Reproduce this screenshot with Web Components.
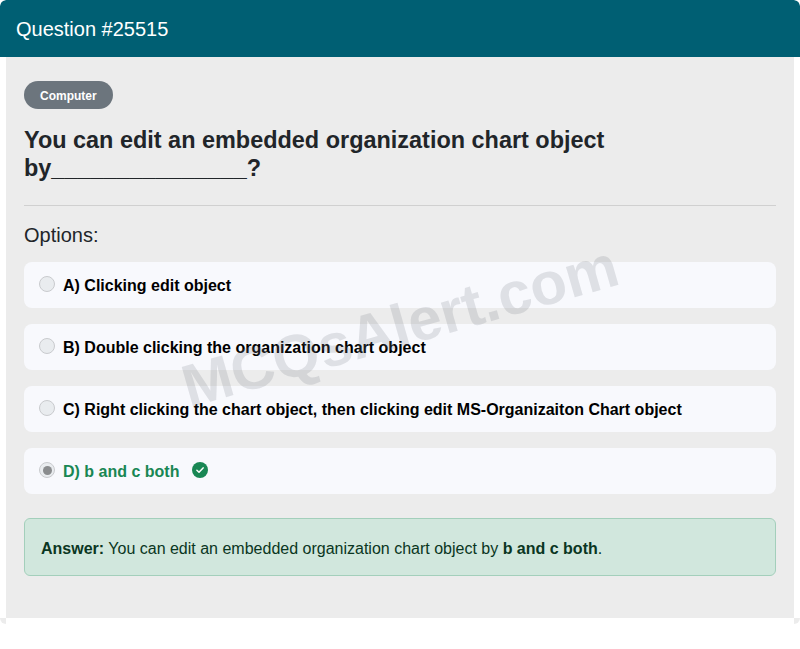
<!DOCTYPE html>
<html>
<head>
<meta charset="utf-8">
<title>Question #25515</title>
<style>
  html, body { margin: 0; background: #fff; }
  body { font-family: "Liberation Sans", Arial, sans-serif; }
</style>
</head>
<body>

<template id="q-option-tpl">
  <style>
    :host {
      display: flex;
      align-items: center;
      height: 46px;
      padding: 0 15px;
      box-sizing: border-box;
      background: #f8f9fd;
      border-radius: 8px;
      font-size: 16px;
      font-weight: 700;
      line-height: 24px;
      color: #000;
    }
    :host([correct]) { color: #198754; }
    .radio {
      flex: none;
      width: 16px;
      height: 16px;
      margin: 0 8px 2px 0;
      box-sizing: border-box;
      border: 1px solid #c9cbce;
      border-radius: 50%;
      background: #e9ecef;
      display: flex;
      align-items: center;
      justify-content: center;
    }
    .dot { display: none; width: 9px; height: 9px; border-radius: 50%; background: #8a8c8e; }
    :host([correct]) .dot { display: block; }
    .label { padding-top: 2px; }
    .check { display: none; flex: none; width: 16px; height: 16px; margin: 0 0 2px 13px; }
    :host([correct]) .check { display: block; }
  </style>
  <span class="radio"><span class="dot"></span></span>
  <span class="label"><slot></slot></span>
  <svg class="check" viewBox="0 0 16 16">
    <circle cx="8" cy="8" r="8" fill="#198754"/>
    <path d="M4.9 8.3 7 10.3 11.1 5.9" fill="none" stroke="#fff" stroke-width="1.5" stroke-linecap="round" stroke-linejoin="round"/>
  </svg>
</template>

<template id="q-card-tpl">
  <style>
    :host {
      display: block;
      position: relative;
      background: linear-gradient(#ececec, #ececec) bottom left / 100% 6px no-repeat;
      border-radius: 6px;
      height: 624px;
      overflow: hidden;
    }
    header {
      height: 57px;
      padding: 2px 16px 0;
      box-sizing: border-box;
      display: flex;
      align-items: center;
      background: #005f73;
      color: #fff;
      font-size: 20px;
      border-radius: 6px 6px 0 0;
    }
    .body {
      margin: 0 6px;
      height: 561px;
      box-sizing: border-box;
      padding: 24px 18px 0;
      background: #ececec;
    }
    .under { height: 6px; background: #fff; margin: 0 6px; }
    ::slotted([slot="mark"]) {
      position: absolute;
      left: 400px;
      top: 326px;
      transform: translate(-50%, -50%) rotate(-16deg);
    }
    .opts { display: flex; flex-direction: column; gap: 16px; }
    .tail { margin-top: 24px; }
  </style>
  <header><slot name="title"></slot></header>
  <div class="body">
    <slot name="badge"></slot>
    <slot name="question"></slot>
    <slot name="options-title"></slot>
    <div class="opts"><slot name="options"></slot></div>
    <div class="tail"><slot name="answer"></slot></div>
  </div>
  <div class="under"></div>
  <slot name="mark"></slot>
</template>

<q-card>
  <span slot="title">Question #25515</span>
  <q-badge slot="badge">Computer</q-badge>
  <q-title slot="question">You can edit an embedded organization chart object by_______________?</q-title>
  <q-heading slot="options-title">Options:</q-heading>
  <q-option slot="options">A) Clicking edit object</q-option>
  <q-option slot="options">B) Double clicking the organization chart object</q-option>
  <q-option slot="options">C) Right clicking the chart object, then clicking edit MS-Organizaiton Chart object</q-option>
  <q-option slot="options" correct>D) b and c both</q-option>
  <q-answer slot="answer"><b>Answer:</b> You can edit an embedded organization chart object by <b>b and c both</b>.</q-answer>
  <q-mark slot="mark">MCQsAlert.com</q-mark>
</q-card>

<script>
  // small elements with nothing but a host box and a slot
  function simple(name, css) {
    customElements.define(name, class extends HTMLElement {
      constructor() {
        super();
        this.attachShadow({ mode: 'open' });
        this.shadowRoot.innerHTML = `<style>${css}</style><slot></slot>`;
      }
    });
  }

  function fromTemplate(name, id) {
    customElements.define(name, class extends HTMLElement {
      constructor() {
        super();
        this.attachShadow({ mode: 'open' });
        this.shadowRoot.appendChild(document.getElementById(id).content.cloneNode(true));
      }
    });
  }

  simple('q-badge', `:host {
    display: block; width: 88.5px; height: 28px; padding: 0 16px; box-sizing: border-box;
    background: #6c757d; border-radius: 14px; color: #fff; white-space: nowrap;
    font-size: 12px; font-weight: 700; line-height: 30px;
  }`);
  simple('q-title', `:host {
    display: block; margin-top: 17px; padding-bottom: 23px; border-bottom: 1px solid #d0d0d0;
    font-size: 23.45px; font-weight: 700; line-height: 28px; color: #212529;
    padding-right: 100px;
  }`);
  simple('q-heading', `:host {
    display: block; margin-top: 16px; margin-bottom: 14px;
    font-size: 20px; line-height: 26px; color: #212529;
  }`);
  simple('q-answer', `:host {
    display: block; padding: 18px 16px 14px; height: 58px; box-sizing: border-box;
    background: #d1e7dd; border: 1px solid #a3cfbb; border-radius: 6px;
    font-size: 16px; line-height: 24px; color: #0a3622;
  }`);
  simple('q-mark', `:host {
    display: block; white-space: nowrap; pointer-events: none;
    font-size: 60px; font-weight: 700; color: rgba(120, 125, 135, 0.2);
  }`);
  fromTemplate('q-option', 'q-option-tpl');
  fromTemplate('q-card', 'q-card-tpl');
</script>
</body>
</html>
